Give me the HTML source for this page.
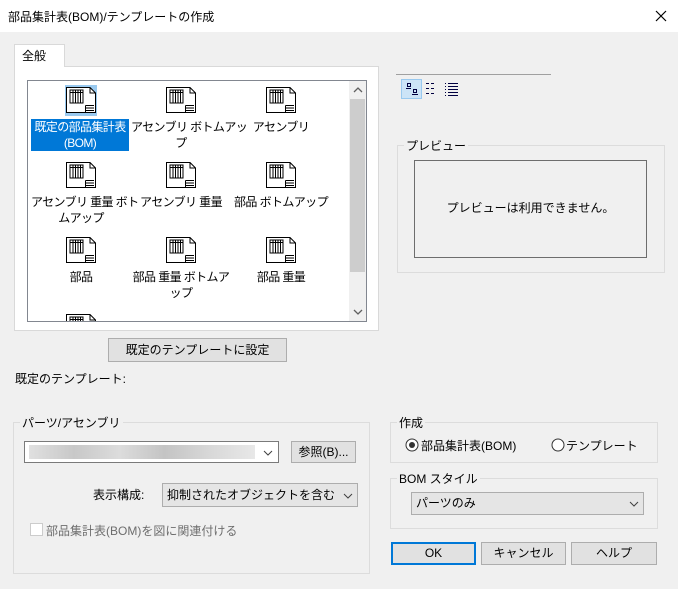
<html><head><style>
body{margin:0;width:678px;height:589px;background:#f0f0f0;font-family:"Liberation Sans","Noto Sans CJK JP",sans-serif;font-size:12px;color:#000;position:relative;overflow:hidden}
.a{position:absolute}
.btn{position:absolute;background:#e1e1e1;border:1px solid #adadad;box-sizing:border-box;text-align:center;font-size:12px}
.grp{position:absolute;border:1px solid #dcdcdc;box-sizing:border-box}
.gl{position:absolute;top:-9px;left:6px;background:#f0f0f0;padding:0 2px;font-size:12px}
.it{position:absolute;width:100px;text-align:center;line-height:16px;font-size:12px;white-space:nowrap;letter-spacing:-0.6px}
.ic{position:absolute;width:32px;height:28px}
</style></head><body>
<svg width="0" height="0" style="position:absolute"><defs><symbol id="d" viewBox="0 0 32 28"><path d="M1.5 1.5H25L30.5 7V26.5H1.5Z" fill="#fff" stroke="#000"/><path d="M25 1.5V7H30.5" fill="none" stroke="#000"/><rect x="5" y="4" width="13" height="13" fill="#fff" stroke="#000"/><path d="M5 6.5H18M8 4V17M10.5 4V17M13 4V17M15.5 4V17" stroke="#000"/><path d="M20.5 19.5H29M20.5 22H29M20.5 24.5H29M20.5 19.5V26" stroke="#000" stroke-width="1"/></symbol></defs></svg>
<div class="a" style="left:0;top:0;width:678px;height:32px;background:#fff"></div>
<div class="a" style="left:8px;top:8px;font-size:12px">部品集計表(BOM)/テンプレートの作成</div>
<svg class="a" style="left:655px;top:10px" width="12" height="12"><path d="M1 1L11 11M11 1L1 11" stroke="#000" stroke-width="1.2"/></svg>
<div class="a" style="left:14px;top:66px;width:365px;height:265px;background:#fff;border:1px solid #d9d9d9;box-sizing:border-box"></div>
<div class="a" style="left:14px;top:44px;width:51px;height:23px;background:#fff;border:1px solid #d9d9d9;border-bottom:none;box-sizing:border-box"></div>
<div class="a" style="left:22px;top:47px">全般</div>
<div class="a" style="left:27px;top:80px;width:340px;height:242px;border:1px solid #828790;box-sizing:border-box;background:#fff;overflow:hidden">
<div class="a" style="left:321px;top:0;width:17px;height:240px;background:#f0f0f0"></div>
<div class="a" style="left:322px;top:18px;width:15px;height:173px;background:#cdcdcd"></div>
<svg class="a" style="left:325px;top:6px" width="10" height="6"><path d="M1 5L5 1L9 5" fill="none" stroke="#606060" stroke-width="1.3"/></svg>
<svg class="a" style="left:325px;top:228px" width="10" height="6"><path d="M1 1L5 5L9 1" fill="none" stroke="#606060" stroke-width="1.3"/></svg>
<div class="a" style="left:37px;top:4px;width:32px;height:31px;background:#99c9ef"></div>
<svg class="ic" style="left:37px;top:5px"><use href="#d"/></svg>
<svg class="ic" style="left:137px;top:5px"><use href="#d"/></svg>
<svg class="ic" style="left:237px;top:5px"><use href="#d"/></svg>
<svg class="ic" style="left:37px;top:80px"><use href="#d"/></svg>
<svg class="ic" style="left:137px;top:80px"><use href="#d"/></svg>
<svg class="ic" style="left:237px;top:80px"><use href="#d"/></svg>
<svg class="ic" style="left:37px;top:155px"><use href="#d"/></svg>
<svg class="ic" style="left:137px;top:155px"><use href="#d"/></svg>
<svg class="ic" style="left:237px;top:155px"><use href="#d"/></svg>
<svg class="ic" style="left:37px;top:232px"><use href="#d"/></svg>
<div class="it" style="left:3px;top:38px;width:98px;height:32px;background:#0078d7;color:#fff">既定の部品集計表<br>(BOM)</div>
<div class="it" style="left:103px;top:38px">アセンブリ ボトムアッ<br>プ</div>
<div class="it" style="left:203px;top:38px">アセンブリ</div>
<div class="it" style="left:3px;top:113px">アセンブリ 重量 ボト<br>ムアップ</div>
<div class="it" style="left:103px;top:113px">アセンブリ 重量</div>
<div class="it" style="left:203px;top:113px">部品 ボトムアップ</div>
<div class="it" style="left:3px;top:188px">部品</div>
<div class="it" style="left:103px;top:188px">部品 重量 ボトムア<br>ップ</div>
<div class="it" style="left:203px;top:188px">部品 重量</div>
</div>
<div class="btn" style="left:108px;top:338px;width:179px;height:24px;line-height:22px">既定のテンプレートに設定</div>
<div class="a" style="left:15px;top:370px">既定のテンプレート:</div>
<div class="a" style="left:396px;top:74px;width:155px;height:1px;background:#a0a0a0"></div>
<div class="a" style="left:401px;top:79px;width:21px;height:20px;background:#cce4f7;border:1px solid #99c9ef;box-sizing:border-box"></div>
<svg class="a" style="left:401px;top:79px" width="70" height="20"><g fill="none" stroke="#000040"><rect x="6.5" y="4.5" width="3" height="3"/><path d="M5 9.5H10"/><rect x="12.5" y="10.5" width="3" height="3"/><path d="M11 15.5H17"/><path d="M25 4.5h3M30 4.5h3M25 9.5h3M30 9.5h3M25 14.5h3M30 14.5h3M47 4.5h10M47 7.5h10M47 10.5h10M47 13.5h10M47 16.5h10M44 4.5h1M44 7.5h1M44 10.5h1M44 13.5h1M44 16.5h1"/></g></svg>
<div class="grp" style="left:397px;top:145px;width:268px;height:128px"><div class="gl">プレビュー</div></div>
<div class="a" style="left:414px;top:160px;width:233px;height:98px;border:1px solid #6d6d6d;box-sizing:border-box;text-align:center;line-height:94px">プレビューは利用できません。</div>
<div class="grp" style="left:13px;top:422px;width:357px;height:152px"><div class="gl">パーツ/アセンブリ</div></div>
<div class="a" style="left:24px;top:441px;width:255px;height:22px;background:#fff;border:1px solid #7a7a7a;box-sizing:border-box"><div class="a" style="left:4px;top:3px;width:226px;height:14px;background:linear-gradient(90deg,#e0e0e0,#c8c8c8,#dcdcdc,#c4c4c4,#d8d8d8,#e8e8e8)"></div><svg class="a" style="left:238px;top:8px" width="10" height="6"><path d="M1 1L5 5L9 1" fill="none" stroke="#404040"/></svg></div>
<div class="btn" style="left:291px;top:441px;width:65px;height:22px;line-height:20px">参照(B)...</div>
<div class="a" style="left:93px;top:486px">表示構成:</div>
<div class="a" style="left:162px;top:483px;width:196px;height:24px;background:#e5e5e5;border:1px solid #adadad;box-sizing:border-box;line-height:22px;padding-left:4px">抑制されたオブジェクトを含む<svg class="a" style="left:180px;top:9px" width="10" height="6"><path d="M1 1L5 5L9 1" fill="none" stroke="#404040"/></svg></div>
<div class="a" style="left:30px;top:523px;width:13px;height:13px;border:1px solid #cccccc;background:#fff;box-sizing:border-box"></div>
<div class="a" style="left:46px;top:522px;color:#6d6d6d">部品集計表(BOM)を図に関連付ける</div>
<div class="grp" style="left:390px;top:422px;width:268px;height:41px"><div class="gl">作成</div></div>
<svg class="a" style="left:405px;top:438px" width="14" height="14"><circle cx="7" cy="7" r="6" fill="#fff" stroke="#333"/><circle cx="7" cy="7" r="3" fill="#333"/></svg>
<div class="a" style="left:421px;top:437px">部品集計表(BOM)</div>
<svg class="a" style="left:551px;top:438px" width="14" height="14"><circle cx="7" cy="7" r="6" fill="#fff" stroke="#333"/></svg>
<div class="a" style="left:566px;top:437px">テンプレート</div>
<div class="grp" style="left:390px;top:478px;width:268px;height:51px"><div class="gl">BOM スタイル</div></div>
<div class="a" style="left:411px;top:492px;width:233px;height:23px;background:#e5e5e5;border:1px solid #adadad;box-sizing:border-box;line-height:21px;padding-left:4px">パーツのみ<svg class="a" style="left:217px;top:8px" width="10" height="6"><path d="M1 1L5 5L9 1" fill="none" stroke="#404040"/></svg></div>
<div class="btn" style="left:391px;top:542px;width:85px;height:23px;line-height:19px;border:2px solid #0078d7">OK</div>
<div class="btn" style="left:481px;top:542px;width:85px;height:23px;line-height:21px">キャンセル</div>
<div class="btn" style="left:571px;top:542px;width:86px;height:23px;line-height:21px">ヘルプ</div>
</body></html>
